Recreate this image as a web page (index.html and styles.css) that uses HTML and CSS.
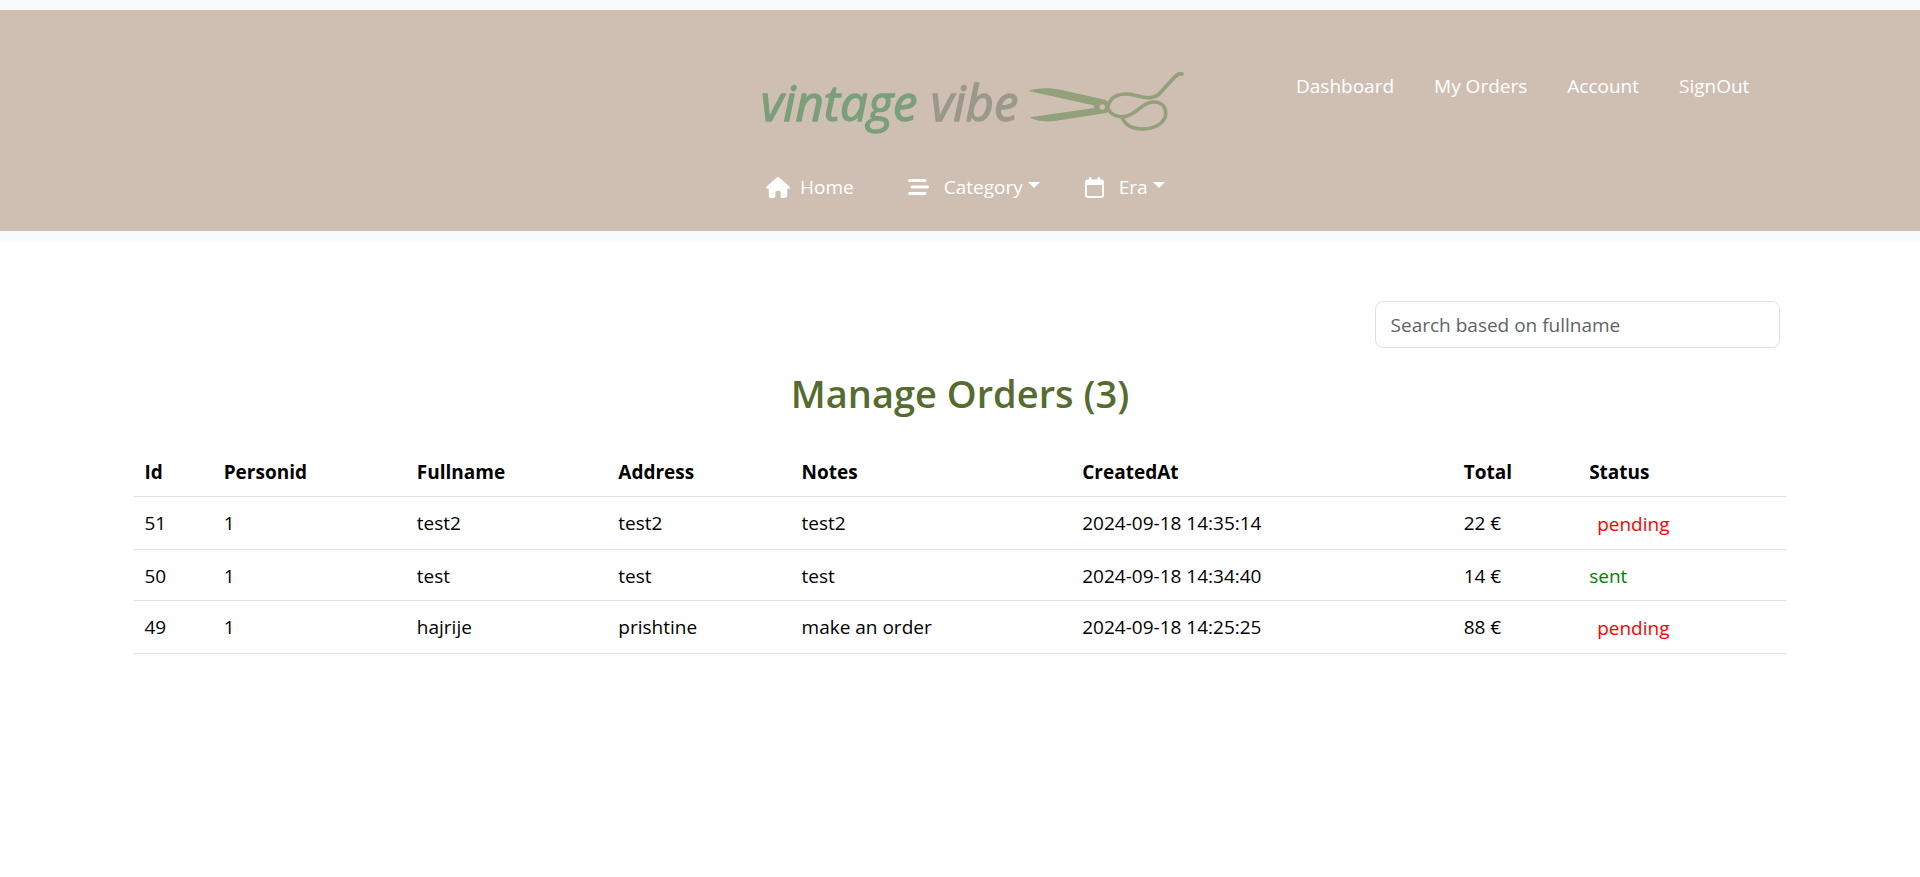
FILE: index.html
```html
<!DOCTYPE html>
<html lang="en">
<head>
<meta charset="utf-8">
<meta name="viewport" content="width=device-width, initial-scale=1">
<title>Vintage Vibe - Manage Orders</title>
<link rel="stylesheet" href="styles.css">
</head>
<body>
<header class="site-header">
  <div class="header-grid">
    <a class="logo" href="#" aria-label="vintage vibe">
      <svg class="logo-art" viewBox="60 50 1290 216">
        <text class="logo-text logo-green" x="62" y="214">vintage</text>
        <text class="logo-text logo-grey" x="572" y="214">vibe</text>
        <g fill="#92a07c">
          <path d="M865 125C890 115 930 115 965 122L1095 151Q1108 156 1106 172Q1110 188 1098 191L945 215C915 219 885 214 869 204L1063 176L1060 168Z"/>
          <circle cx="1087" cy="173" r="8" fill="#cfbfb2"/>
        </g>
        <g fill="none" stroke="#92a07c" stroke-width="11" stroke-linecap="round">
          <path d="M1104 171C1112 137 1145 130 1176 136C1205 142 1235 153 1255 136C1275 116 1295 91 1311 77Q1320 71 1326 74"/>
          <path d="M1104 176C1112 201 1145 209 1171 196C1197 184 1212 157 1243 158C1267 159 1278 174 1277 194C1275 224 1241 239 1205 239C1176 239 1156 226 1147 207"/>
        </g>
      </svg>
    </a>
    <nav class="account-nav" aria-label="Account">
      <a href="#">Dashboard</a>
      <a href="#">My Orders</a>
      <a href="#">Account</a>
      <a href="#">SignOut</a>
    </nav>
    <nav class="main-nav" aria-label="Main">
      <a class="nav-item" href="#">
        <svg class="icon-home" viewBox="0 0 576 512"><path d="M575.8 255.5c0 18-15 32.1-32 32.1h-32l.7 160.2c0 35.300-21 64.200-56 64.200H392c-22.100 0-40-17.900-40-40V376c0-17.700-14.300-32-32-32h-64c-17.700 0-32 14.300-32 32v96c0 22.100-17.900 40-40 40h-64c-35 0-56-28-56-64V287.600H32c-18 0-32-14-32-32.100c0-9 3-17 10-24L266.400 8c7-7 15-8 22-8s15 2 21 7L564.800 231.500c8 7 12 15 11 24z"/></svg>
        <span>Home</span>
      </a>
      <button class="nav-item" type="button">
        <svg class="icon-menu" viewBox="0 0 21 16"><path d="M1.500 1.500h15.500M4 8h15.500M1.500 14.500h15.500"/></svg>
        <span class="caret-label">Category</span>
      </button>
      <button class="nav-item" type="button">
        <svg class="icon-calendar" viewBox="0 0 19 21"><path fill-rule="evenodd" d="M4 1.200a1.200 1.200 0 0 1 2.400 0V2.500h6.200V1.200a1.200 1.200 0 0 1 2.400 0V2.500h1.300A2.700 2.700 0 0 1 19 5.200v13A2.700 2.700 0 0 1 16.300 21H2.700A2.700 2.700 0 0 1 0 18.200v-13A2.700 2.700 0 0 1 2.700 2.500H4zM2 8v10.200q0 .8.700.8h13.600q.7 0 .7-.8V8z"/></svg>
        <span class="caret-label">Era</span>
      </button>
    </nav>
  </div>
</header>
<main class="container">
  <div class="search-row">
    <input class="search" type="search" aria-label="Search based on fullname" placeholder="Search based on fullname">
  </div>
  <h1 class="title">Manage Orders (3)</h1>
  <table class="orders">
    <colgroup>
      <col class="c-id"><col class="c-person"><col class="c-name"><col class="c-address"><col class="c-notes"><col class="c-created"><col class="c-total"><col class="c-status">
    </colgroup>
    <thead>
      <tr><th scope="col">Id</th><th scope="col">Personid</th><th scope="col">Fullname</th><th scope="col">Address</th><th scope="col">Notes</th><th scope="col">CreatedAt</th><th scope="col">Total</th><th scope="col">Status</th></tr>
    </thead>
    <tbody>
      <tr><td>51</td><td>1</td><td>test2</td><td>test2</td><td>test2</td><td>2024-09-18 14:35:14</td><td>22 €</td><td><button class="pending" type="button">pending</button></td></tr>
      <tr><td>50</td><td>1</td><td>test</td><td>test</td><td>test</td><td>2024-09-18 14:34:40</td><td>14 €</td><td class="sent">sent</td></tr>
      <tr><td>49</td><td>1</td><td>hajrije</td><td>prishtine</td><td>make an order</td><td>2024-09-18 14:25:25</td><td>88 €</td><td><button class="pending" type="button">pending</button></td></tr>
    </tbody>
  </table>
</main>
</body>
</html>
```
FILE: styles.css
```css
* { box-sizing: border-box; }
body {
  margin: 0;
  background: #fff;
  color: #000;
  font: 19px/30px "Open Sans", "Noto Sans", sans-serif;
}
button, input { font: inherit; }

.site-header {
  padding: 10px 0;
  background: #f8fafc;
}
.header-grid {
  display: grid;
  grid-template-columns: 760fr 536fr 624fr;
  row-gap: 32px;
  align-items: start;
  padding: 56px 0 29px;
  background: #cfbfb2;
}
.logo { grid-column: 2; display: block; }
.logo-art { display: block; width: 430px; height: 72px; overflow: visible; }
.logo-text {
  font-family: "Open Sans", "Noto Sans", sans-serif;
  font-style: italic;
  font-size: 147px;
  stroke-width: 4px;
  stroke-linejoin: round;
}
.logo-green { fill: #7b9f7b; stroke: #7b9f7b; }
.logo-grey { fill: #9a988b; stroke: #9a988b; }

.account-nav {
  grid-column: 3;
  display: flex;
  gap: 40px;
  padding-top: 5px;
}
.account-nav a, .nav-item { color: #fff; text-decoration: none; }
.main-nav {
  grid-column: 2 / -1;
  display: flex;
  padding: 2px 6px 0;
}
.nav-item {
  display: flex;
  align-items: center;
  padding: 0;
  border: 0;
  background: none;
  cursor: pointer;
}
.nav-item svg { fill: #fff; flex: none; }
.icon-home { width: 24px; height: 21px; margin-right: 10px; }
.icon-menu { width: 21px; height: 16px; margin: 0 15px 0 54px; }
.icon-menu path { stroke: #fff; stroke-width: 3; stroke-linecap: round; }
.icon-calendar { width: 19px; height: 21px; margin: 0 15px 0 45px; }
.caret-label::after {
  content: "";
  display: inline-block;
  margin-left: 5px;
  vertical-align: 6px;
  border: 6px solid transparent;
  border-top-color: #fff;
  border-bottom: 0;
}

.container {
  width: 86%;
  margin: 0 auto;
  padding-top: 60px;
}
.search-row {
  display: flex;
  justify-content: flex-end;
  padding-right: 6px;
}
.search {
  width: 405px;
  height: 47px;
  padding: 0 15px;
  border: 1px solid #dee2e6;
  border-radius: 8px;
  background: #fff;
  color: #212529;
}
.search::placeholder { color: #5f6468; opacity: 1; }
.title {
  margin: 21px 0 29px;
  color: #556b2f;
  font-size: 38px;
  line-height: 48px;
  font-weight: 600;
  text-align: center;
}
.orders {
  width: 100%;
  table-layout: fixed;
  border-collapse: collapse;
}
.orders th, .orders td {
  padding: 11px 10px 9px;
  border-bottom: 1px solid #dee2e6;
  text-align: left;
  vertical-align: top;
}
.orders th { font-weight: 700; }
.c-id { width: 4.8%; }
.c-person { width: 11.7%; }
.c-name { width: 12.2%; }
.c-address { width: 11.1%; }
.c-notes { width: 17%; }
.c-created { width: 23.1%; }
.c-total { width: 7.6%; }
.c-status { width: 12.5%; }
.pending {
  display: block;
  padding: 1px 8px;
  border: 0;
  background: none;
  color: #f00;
  cursor: pointer;
}
.orders .sent { color: #008000; }
```
